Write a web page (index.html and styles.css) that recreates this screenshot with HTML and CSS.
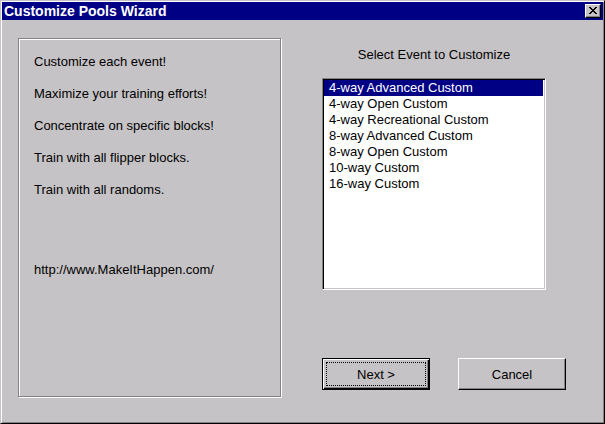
FILE: index.html
```html
<!DOCTYPE html>
<html lang="en">
<head>
    <meta charset="UTF-8">
    <meta name="viewport" content="width=device-width, initial-scale=1.0">
    <title>Customize Pools Wizard</title>
    <link rel="stylesheet" href="styles.css">
</head>
<body>
    <div class="window">
        <div class="titlebar">
            <span class="title">Customize Pools Wizard</span>
            <button class="close" type="button" aria-label="Close">
                <svg width="8" height="7" viewBox="0 0 8 7">
                    <path d="M0 0h2v1h-2z M6 0h2v1h-2z M1 1h2v1h-2z M5 1h2v1h-2z M2 2h4v1h-4z M3 3h2v1h-2z M2 4h4v1h-4z M1 5h2v1h-2z M5 5h2v1h-2z M0 6h2v1h-2z M6 6h2v1h-2z" fill="#000"/>
                </svg>
            </button>
        </div>

        <div class="client">
            <div class="panel">
                <p>Customize each event!</p>
                <p>Maximize your training efforts!</p>
                <p>Concentrate on specific blocks!</p>
                <p>Train with all flipper blocks.</p>
                <p>Train with all randoms.</p>
                <p class="url">http://www.MakeItHappen.com/</p>
            </div>

            <div class="side">
                <div class="caption">Select Event to Customize</div>
                <ul class="listbox">
                    <li class="selected">4-way Advanced Custom</li>
                    <li>4-way Open Custom</li>
                    <li>4-way Recreational Custom</li>
                    <li>8-way Advanced Custom</li>
                    <li>8-way Open Custom</li>
                    <li>10-way Custom</li>
                    <li>16-way Custom</li>
                </ul>
                <div class="buttons">
                    <button class="btn default" type="button"><span>Next &gt;</span></button>
                    <button class="btn" type="button"><span>Cancel</span></button>
                </div>
            </div>
        </div>
    </div>
</body>
</html>
```

FILE: styles.css
```css
* {
    box-sizing: border-box;
    margin: 0;
    padding: 0;
}

body {
    background-color: #c6c3c6;
    font-family: 'Liberation Sans', Arial, sans-serif;
    font-size: 13px;
    color: #000;
}

.window {
    width: 605px;
    height: 424px;
    display: flex;
    flex-direction: column;
    padding: 1px;
    background-color: #c6c3c6;
    border: 1px solid;
    border-color: #c6c3c6 #000 #000 #c6c3c6;
    box-shadow: inset 1px 1px #fff, inset -1px -1px #848284;
}

.titlebar {
    height: 18px;
    display: flex;
    justify-content: space-between;
    align-items: center;
    padding: 0 2px 0 2px;
    background-color: #000084;
}

.title {
    color: #fff;
    font-weight: bold;
    font-size: 14px;
    line-height: 18px;
}

.close {
    width: 16px;
    height: 14px;
    display: flex;
    justify-content: center;
    align-items: center;
    padding-bottom: 1px;
    background-color: #c6c3c6;
    border: 1px solid;
    border-color: #fff #000 #000 #fff;
    box-shadow: inset -1px -1px #848284;
}

.client {
    flex: 1;
    display: flex;
    padding: 18px 0 0 16px;
}

.panel {
    width: 263px;
    height: 359px;
    padding: 15px 0 0 15px;
    border: 1px solid #848284;
    box-shadow: inset 1px 1px #fff, 1px 1px #fff;
}

.panel p {
    line-height: 16px;
    margin-bottom: 16px;
}

.panel p.url {
    margin-top: 64px;
}

.side {
    margin-left: 41px;
    width: 245px;
}

.caption {
    width: 224px;
    height: 40px;
    padding-top: 9px;
    line-height: 16px;
    text-align: center;
}

.listbox {
    list-style: none;
    width: 224px;
    height: 212px;
    padding: 1px;
    background-color: #fff;
    border: 1px solid;
    border-color: #848284 #fff #fff #848284;
    box-shadow: inset 1px 1px #000, inset -1px -1px #c6c3c6;
}

.listbox li {
    height: 16px;
    line-height: 16px;
    padding-left: 5px;
    margin-right: 1px;
    white-space: nowrap;
}

.listbox li.selected {
    background-color: #000084;
    color: #fff;
}

.buttons {
    display: flex;
    gap: 28px;
    margin-top: 68px;
}

.btn {
    width: 108px;
    height: 32px;
    display: flex;
    padding: 3px;
    font-family: inherit;
    font-size: 13px;
    color: #000;
    background-color: #c6c3c6;
    border: 1px solid;
    border-color: #fff #000 #000 #fff;
    box-shadow: inset -1px -1px #848284;
}

.btn span {
    flex: 1;
    display: flex;
    justify-content: center;
    align-items: center;
    border: 1px solid transparent;
}

.btn.default {
    border-color: #000;
    box-shadow: inset 1px 1px #fff, inset -1px -1px #000, inset -2px -2px #848284;
}

.btn.default span {
    border: 1px dotted #000;
}
```
